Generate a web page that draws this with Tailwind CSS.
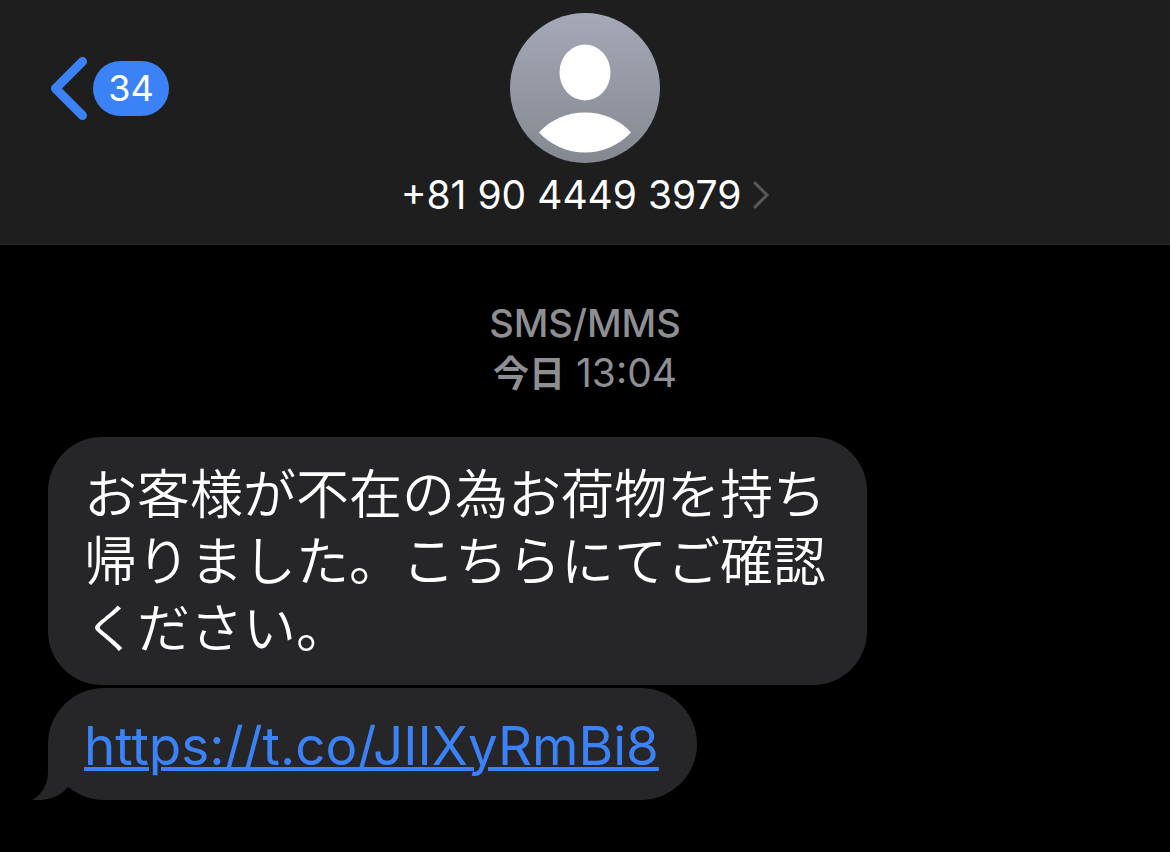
<!DOCTYPE html>
<html lang="ja">
<head>
    <meta charset="UTF-8">
    <meta name="viewport" content="width=device-width, initial-scale=1.0">
    <title>+81 90 4449 3979</title>
    <script src="https://cdn.jsdelivr.net/npm/@tailwindcss/browser@4"></script>
</head>
<body class="bg-black text-white min-h-screen font-['Inter','Noto_Sans_CJK_JP',sans-serif]">

    <!-- Header -->
    <header class="relative bg-[#1e1e1e] border-b border-[#2a2a2a] pt-[13px] pb-[25px]">
        <button type="button" aria-label="戻る 34" class="absolute left-12 top-14 flex items-center gap-1">
            <svg class="w-[41px] h-16" viewBox="0 0 41 64" fill="none" stroke="#3b82f7" stroke-width="9" stroke-linecap="round" stroke-linejoin="round">
                <path d="M34.500 5.500 L7.500 32.500 L34.500 59.500"/>
            </svg>
            <span class="bg-[#3b82f7] rounded-full w-[76px] h-[55px] flex items-center justify-center text-[36px]">34</span>
        </button>

        <button type="button" class="flex flex-col items-center mx-auto">
            <svg class="w-[150px] h-[150px]" viewBox="0 0 150 150">
                <defs>
                    <linearGradient id="avatar" x1="0" y1="0" x2="0" y2="1">
                        <stop offset="0" stop-color="#a5a9b7"/>
                        <stop offset="1" stop-color="#848890"/>
                    </linearGradient>
                </defs>
                <circle cx="75" cy="75" r="75" fill="url(#avatar)"/>
                <ellipse cx="75" cy="59.500" rx="25.500" ry="28" fill="#fff"/>
                <path d="M29 119.500 C40 107 57 99.500 75 99.500 C93 99.500 110 107 121 119.500 C109 132 93 139.500 75 139.500 C57 139.500 41 132 29 119.500Z" fill="#fff"/>
            </svg>
            <span class="flex items-center gap-3 mt-2 text-[39px] leading-12">
                +81 90 4449 3979
                <svg class="w-4 h-7" viewBox="0 0 16 28" fill="none" stroke="#5a5a5e" stroke-width="3" stroke-linecap="round" stroke-linejoin="miter">
                    <path d="M2 2 L14 14 L2 26"/>
                </svg>
            </span>
        </button>
    </header>

    <!-- Messages -->
    <main class="px-12 pt-[53px] pb-12">
        <div class="text-center text-[#8e8e93] text-[39px] leading-[50px]">
            <p class="text-[38px] font-medium">SMS/MMS</p>
            <p><span class="text-[36px] font-bold">今日</span> 13:04</p>
        </div>

        <div class="flex flex-col items-start gap-[3px] mt-[38px]">
            <p class="bg-[#262628] rounded-[54px] pl-9 pr-[41px] pt-[25px] pb-[22px] text-[53px] leading-[67px] font-[350]">お客様が不在の為お荷物を持ち<br>帰りました。こちらにてご確認<br>ください。</p>
            <div class="relative bg-[#262628] rounded-[56px] pl-9 pr-[38px] pt-6 pb-5">
                <svg class="absolute -left-4 bottom-0 w-14 h-14" viewBox="0 0 56 56" fill="#262628">
                    <path d="M16 0 V28 C16 40 10 51 0 56 C14 57 26 54 35 44 L56 20 Z"/>
                </svg>
                <a href="https://t.co/JIIXyRmBi8" class="relative block text-[53px] leading-[68px] text-[#3b82f7] underline decoration-4">https://t.co/JIIXyRmBi8</a>
            </div>
        </div>
    </main>

</body>
</html>
